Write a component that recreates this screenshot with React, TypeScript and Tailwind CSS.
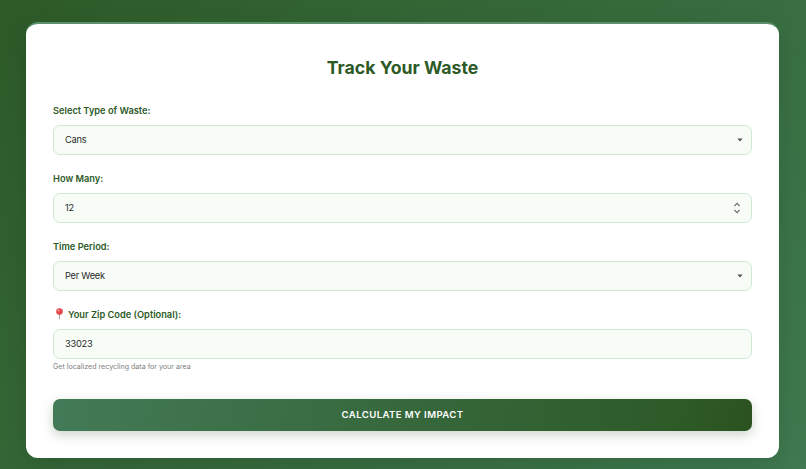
const font = 'font-["Inter",sans-serif]'

function Caret() {
  return (
    <svg width="6" height="4" viewBox="0 0 6 4" className="absolute right-[8px] top-[11.5px]">
      <path d="M0.3 0.6h5.4L3 3.6z" fill="#555" />
    </svg>
  )
}

function Spinner() {
  return (
    <svg width="8" height="12" viewBox="0 0 8 12" fill="none" stroke="#666" strokeWidth="1.1" className="absolute right-[10px] top-[8px]">
      <path d="M1.4 4.2 4 1.4l2.6 2.8" />
      <path d="M1.4 7.8 4 10.6l2.6-2.8" />
    </svg>
  )
}

function Field({ label, value, icon, hint, control }: { label: string; value: string; icon?: boolean; hint?: string; control?: 'select' | 'number' }) {
  return (
    <div className="flex flex-col">
      <div className="flex h-[15px] items-center gap-[4px] text-[9.25px] leading-[15px] font-semibold text-[#2d5a27]">
        {icon && (
          <svg width="11" height="12" viewBox="0 0 11 12" className="mb-[2px]">
            <path d="M6.5 6.5V11.4" stroke="#b5aca4" strokeWidth="1.1" />
            <circle cx="6.5" cy="3.6" r="3.3" fill="#e5484d" />
            <circle cx="5.4" cy="2.6" r="0.9" fill="#f7b4b4" />
          </svg>
        )}
        <span>{label}</span>
      </div>
      <div className="relative mt-[7px] flex h-[30px] items-center rounded-[7px] border-[1.5px] border-[#cfe8d1] bg-[#f7fcf7] pl-[11px] text-[9.25px] tracking-[-0.25px] text-[#2a2a2a]">
        {value}
        {control === 'select' && <Caret />}
        {control === 'number' && <Spinner />}
      </div>
      {hint && <div className="mt-[1px] h-[13px] text-[7.1px] leading-[13px] text-[#808080]">{hint}</div>}
    </div>
  )
}

export default function App() {
  return (
    <div className={`${font} h-[469px] w-[806px] overflow-hidden bg-[linear-gradient(135deg,#2d5a27_0%,#3f7a50_100%)] pt-[22px] pr-[27px] pl-[26px]`}>
      <div className="h-[436px] rounded-[12px] border-t-[2px] border-[#5c8f6c] bg-white px-[27px] pt-[31px] shadow-[0_8px_24px_rgba(0,0,0,0.12)]">
        <h1 className="h-[26px] text-center text-[17.7px] leading-[26px] font-bold text-[#2d5a27]">Track Your Waste</h1>
        <div className="mt-[22px] flex flex-col gap-[16px]">
          <Field label="Select Type of Waste:" value="Cans" control="select" />
          <Field label="How Many:" value="12" control="number" />
          <Field label="Time Period:" value="Per Week" control="select" />
          <Field label="Your Zip Code (Optional):" value="33023" icon hint="Get localized recycling data for your area" />
        </div>
        <button type="button" className="mt-[26px] h-[32px] w-full rounded-[7px] bg-[linear-gradient(100deg,#437a57_0%,#2d5a27_90%,#2b5220_100%)] text-[9.6px] font-semibold tracking-[0.4px] text-white uppercase shadow-[0_4px_12px_rgba(45,90,39,0.25)]">
          Calculate My Impact
        </button>
      </div>
    </div>
  )
}
